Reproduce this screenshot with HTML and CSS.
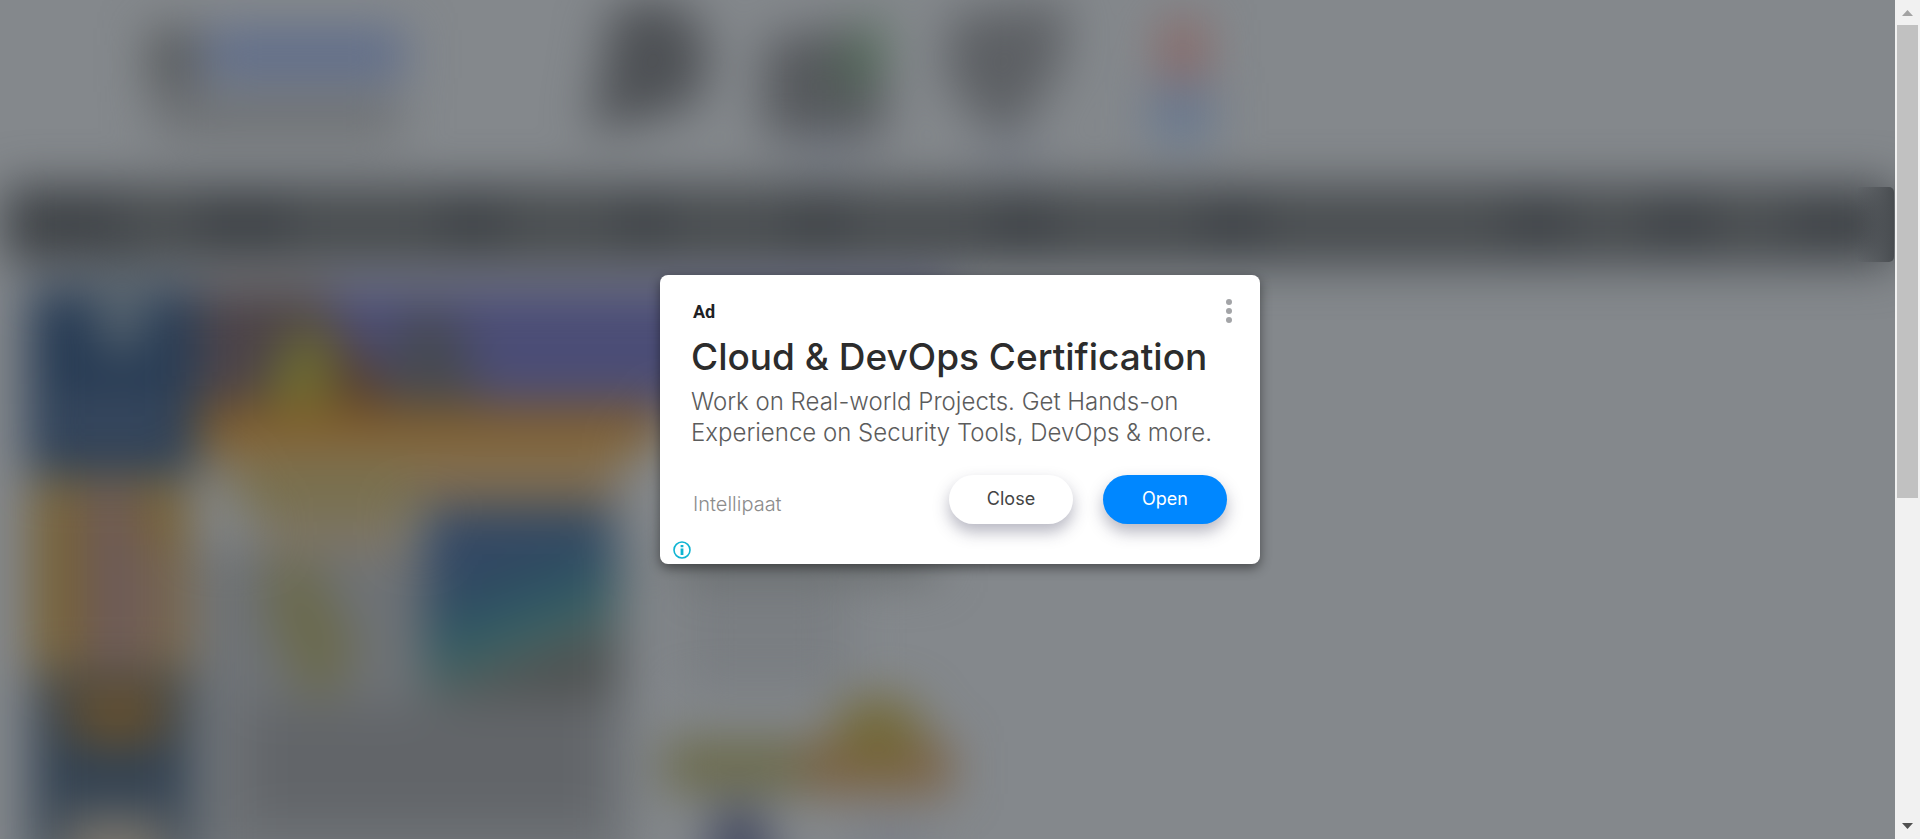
FILE: index.html
```html
<!DOCTYPE html>
<html lang="en">
<head>
<meta charset="utf-8">
<meta name="viewport" content="width=device-width, initial-scale=1">
<title>Cloud &amp; DevOps Certification</title>
<link rel="stylesheet" href="styles.css">
</head>
<body>
<div class="window">
  <main class="viewport">
    <svg class="backdrop" viewBox="0 0 1895 839" preserveAspectRatio="xMinYMin slice" aria-hidden="true">
      <defs>
        <filter id="soft" filterUnits="userSpaceOnUse" x="-100" y="-100" width="2100" height="1100" color-interpolation-filters="sRGB"><feGaussianBlur stdDeviation="24"/></filter>
        <linearGradient id="photo" x1="0" y1="0" x2="0.35" y2="1">
          <stop offset="0" stop-color="#384a66"/><stop offset="0.4" stop-color="#304762"/><stop offset="0.68" stop-color="#2f5a63"/><stop offset="0.82" stop-color="#4a6663"/><stop offset="0.92" stop-color="#4f5252"/>
        </linearGradient>
        <linearGradient id="tab" x1="0" x2="1">
          <stop offset="0" stop-color="#4a4e52" stop-opacity="0"/><stop offset="1" stop-color="#484c50"/>
        </linearGradient>
      </defs>
      <g filter="url(#soft)">
        <!-- logo -->
        <rect x="150" y="28" width="46" height="64" fill="#55585a"/>
        <rect x="205" y="29" width="200" height="50" fill="#5e6c8a"/>
        <rect x="155" y="98" width="245" height="38" fill="#6b6e71"/>
        <!-- header icons -->
        <path d="M610 12Q660-16 698 22Q718 65 694 104Q660 118 590 132Q602 75 610 12Z" fill="#4e5155"/>
        <path d="M764 40L845 26L884 56V136H764Z" fill="#56595d"/>
        <path d="M836 66L880 8L884 66L844 98Z" fill="#4e6954"/>
        <path d="M950 14L1068 2L1060 70L1012 138L980 122L946 80Z" fill="#5d6064"/>
        <rect x="1162" y="20" width="42" height="60" fill="#8a6664"/>
        <rect x="1150" y="83" width="62" height="60" fill="#68788f"/>
        <rect x="790" y="142" width="70" height="20" fill="#757b87"/>
        <rect x="980" y="142" width="60" height="20" fill="#757b87"/>
        <!-- navigation -->
        <rect x="4" y="186" width="1891" height="77" fill="#3f4347"/>
        <g fill="#4e5254">
          <rect x="120" y="202" width="80" height="38"/><rect x="290" y="202" width="150" height="38"/><rect x="505" y="202" width="115" height="38"/>
          <rect x="670" y="202" width="120" height="38"/><rect x="845" y="202" width="145" height="38"/><rect x="1055" y="202" width="145" height="38"/>
          <rect x="1265" y="202" width="240" height="38"/><rect x="1570" y="202" width="75" height="38"/><rect x="1715" y="202" width="75" height="38"/>
        </g>
        <!-- sidebar -->
        <rect x="28" y="287" width="170" height="186" fill="#273b54"/>
        <ellipse cx="122" cy="312" rx="26" ry="44" fill="#57646f"/>
        <rect x="52" y="400" width="120" height="38" fill="#3c4b60"/>
        <rect x="30" y="477" width="160" height="193" fill="#776237"/>
        <rect x="84" y="488" width="53" height="180" fill="#6d5a58"/>
        <rect x="137" y="545" width="38" height="115" fill="#746252"/>
        <rect x="31" y="672" width="161" height="200" fill="#334252"/>
        <rect x="45" y="673" width="130" height="34" fill="#484640"/>
        <ellipse cx="118" cy="719" rx="54" ry="26" fill="#67502c"/>
        <rect x="62" y="814" width="106" height="80" fill="#78746c"/>
        <!-- banner -->
        <rect x="200" y="287" width="750" height="125" fill="#4b4d76"/>
        <rect x="200" y="287" width="130" height="125" fill="#4c4348"/>
        <path d="M256 420L292 330H330L336 420Z" fill="#6e6d30"/>
        <path d="M334 320L410 420H337Z" fill="#553c2b"/>
        <path d="M400 314H455L484 408H380Z" fill="#464952"/>
        <rect x="195" y="406" width="470" height="38" fill="#815d29"/>
        <rect x="205" y="444" width="430" height="30" fill="#827154"/>
        <rect x="235" y="468" width="180" height="44" fill="#776f4b"/>
        <rect x="415" y="465" width="212" height="40" fill="#806c4f"/>
        <rect x="618" y="466" width="60" height="80" fill="#84888c"/>
        <!-- article -->
        <rect x="200" y="545" width="430" height="330" fill="#6e7276"/>
        <rect x="260" y="512" width="150" height="42" fill="#7e7564"/>
        <rect x="425" y="506" width="190" height="192" fill="#5a6369"/>
        <path d="M266 560H314L356 645L335 697H304L268 620Z" fill="#6b6a4d"/>
        <rect x="426" y="506" width="188" height="194" fill="url(#photo)"/>
        <rect x="248" y="706" width="355" height="116" fill="#626569"/>
        <!-- right column -->
        <rect x="675" y="535" width="260" height="41" fill="#676b6c"/>
        <rect x="680" y="580" width="170" height="114" fill="#7a7e82"/>
        <rect x="664" y="740" width="145" height="52" fill="#6b6a4a"/>
        <rect x="805" y="742" width="146" height="52" fill="#7b6142"/>
        <ellipse cx="878" cy="730" rx="46" ry="34" fill="#736938"/>
        <path d="M716 806H758L780 885H707Z" fill="#41475f"/>
        <rect x="855" y="825" width="70" height="30" fill="#767b86"/>
      </g>
      <rect x="1856" y="187" width="38" height="75" rx="5" fill="url(#tab)"/>
    </svg>

    <section class="card" aria-labelledby="headline">
      <header class="card-top">
        <span class="badge">Ad</span>
        <button class="menu" type="button" aria-label="More options">
          <svg width="6" height="24" viewBox="0 0 6 24" fill="#a3a4a7"><circle cx="3" cy="3" r="3"/><circle cx="3" cy="12" r="3"/><circle cx="3" cy="21" r="3"/></svg>
        </button>
      </header>
      <h1 class="headline" id="headline">Cloud &amp; DevOps Certification</h1>
      <p class="copy">Work on Real-world Projects. Get Hands-on Experience on Security Tools, DevOps &amp; more.</p>
      <footer class="card-bottom">
        <span class="brand">Intellipaat</span>
        <button class="pill" type="button">Close</button>
        <button class="pill pill-primary" type="button">Open</button>
      </footer>
      <a class="choices" href="#" aria-label="Ad choices">
        <svg width="18" height="18" viewBox="0 0 18 18"><circle cx="9" cy="9" r="8" fill="none" stroke="#0fb4d2" stroke-width="1.6"/><path d="M7.6 4h2.8v2.300H7.600zM7.600 7.500h2.800v6.500H7.600z" fill="#0fb4d2"/></svg>
      </a>
    </section>
  </main>

  <div class="scrollbar" aria-hidden="true">
    <svg class="arrow" viewBox="0 0 25 25"><path d="M7 16L12.500 10L18 16Z" fill="#a3a3a3"/></svg>
    <div class="track"><div class="thumb"></div></div>
    <svg class="arrow" viewBox="0 0 25 25"><path d="M7 9L12.500 15L18 9Z" fill="#505050"/></svg>
  </div>
</div>
</body>
</html>
```

FILE: styles.css
```css
* {
  box-sizing: border-box;
}

body {
  margin: 0;
  background: #84888c;
  font-family: Inter, Roboto, sans-serif;
}

.window {
  display: flex;
  height: 100vh;
  overflow: hidden;
}

.viewport {
  position: relative;
  flex: 1;
  display: flex;
  align-items: center;
  justify-content: center;
  padding-left: 25px;
}

.backdrop {
  position: absolute;
  inset: 0;
  width: 100%;
  height: 100%;
}

.card {
  position: relative;
  width: 600px;
  max-width: 100%;
  padding: 24px 33px 40px 31px;
  border-radius: 8px;
  background: #fff;
  box-shadow: 0 4px 12px rgba(0, 0, 0, 0.45);
}

.card-top {
  display: flex;
  align-items: center;
  justify-content: space-between;
  height: 24px;
}

.badge {
  padding: 1px 0 0 2px;
  color: #202124;
  font: 700 18px/24px Roboto, sans-serif;
}

.menu {
  display: flex;
  justify-content: center;
  width: 6px;
  margin-right: -5px;
  padding: 0;
  border: 0;
  background: none;
  cursor: pointer;
}

.menu svg {
  flex: none;
}

.headline {
  margin: 10px 0 0;
  color: #2c2c2c;
  font-size: 37px;
  font-weight: 450;
  line-height: 48px;
  white-space: nowrap;
}

.copy {
  margin: 5px 0 0;
  color: #5c5c5c;
  font-size: 24px;
  font-weight: 300;
  line-height: 31px;
}

.card-bottom {
  display: flex;
  align-items: flex-start;
  gap: 30px;
  margin-top: 27px;
}

.brand {
  flex: 1;
  padding: 14px 0 0 2px;
  color: #8c8c8c;
  font-size: 20px;
  font-weight: 300;
  line-height: 30px;
}

.pill {
  width: 124px;
  height: 49px;
  padding: 0 0 2px;
  border: 0;
  border-radius: 25px;
  background: #fff;
  color: #444;
  font: 400 18px/47px Inter, Roboto, sans-serif;
  box-shadow: 0 8px 16px rgba(50, 50, 80, 0.35);
  cursor: pointer;
}

.pill-primary {
  background: #0087ff;
  color: #fff;
}

.choices {
  position: absolute;
  left: 13px;
  bottom: 5px;
  display: flex;
}

.scrollbar {
  display: flex;
  flex-direction: column;
  width: 25px;
  background: #f1f1f1;
}

.arrow {
  flex: none;
  width: 25px;
  height: 25px;
}

.track {
  flex: 1;
  padding: 0 2px;
}

.thumb {
  height: 60%;
  background: #c1c1c1;
}
```
